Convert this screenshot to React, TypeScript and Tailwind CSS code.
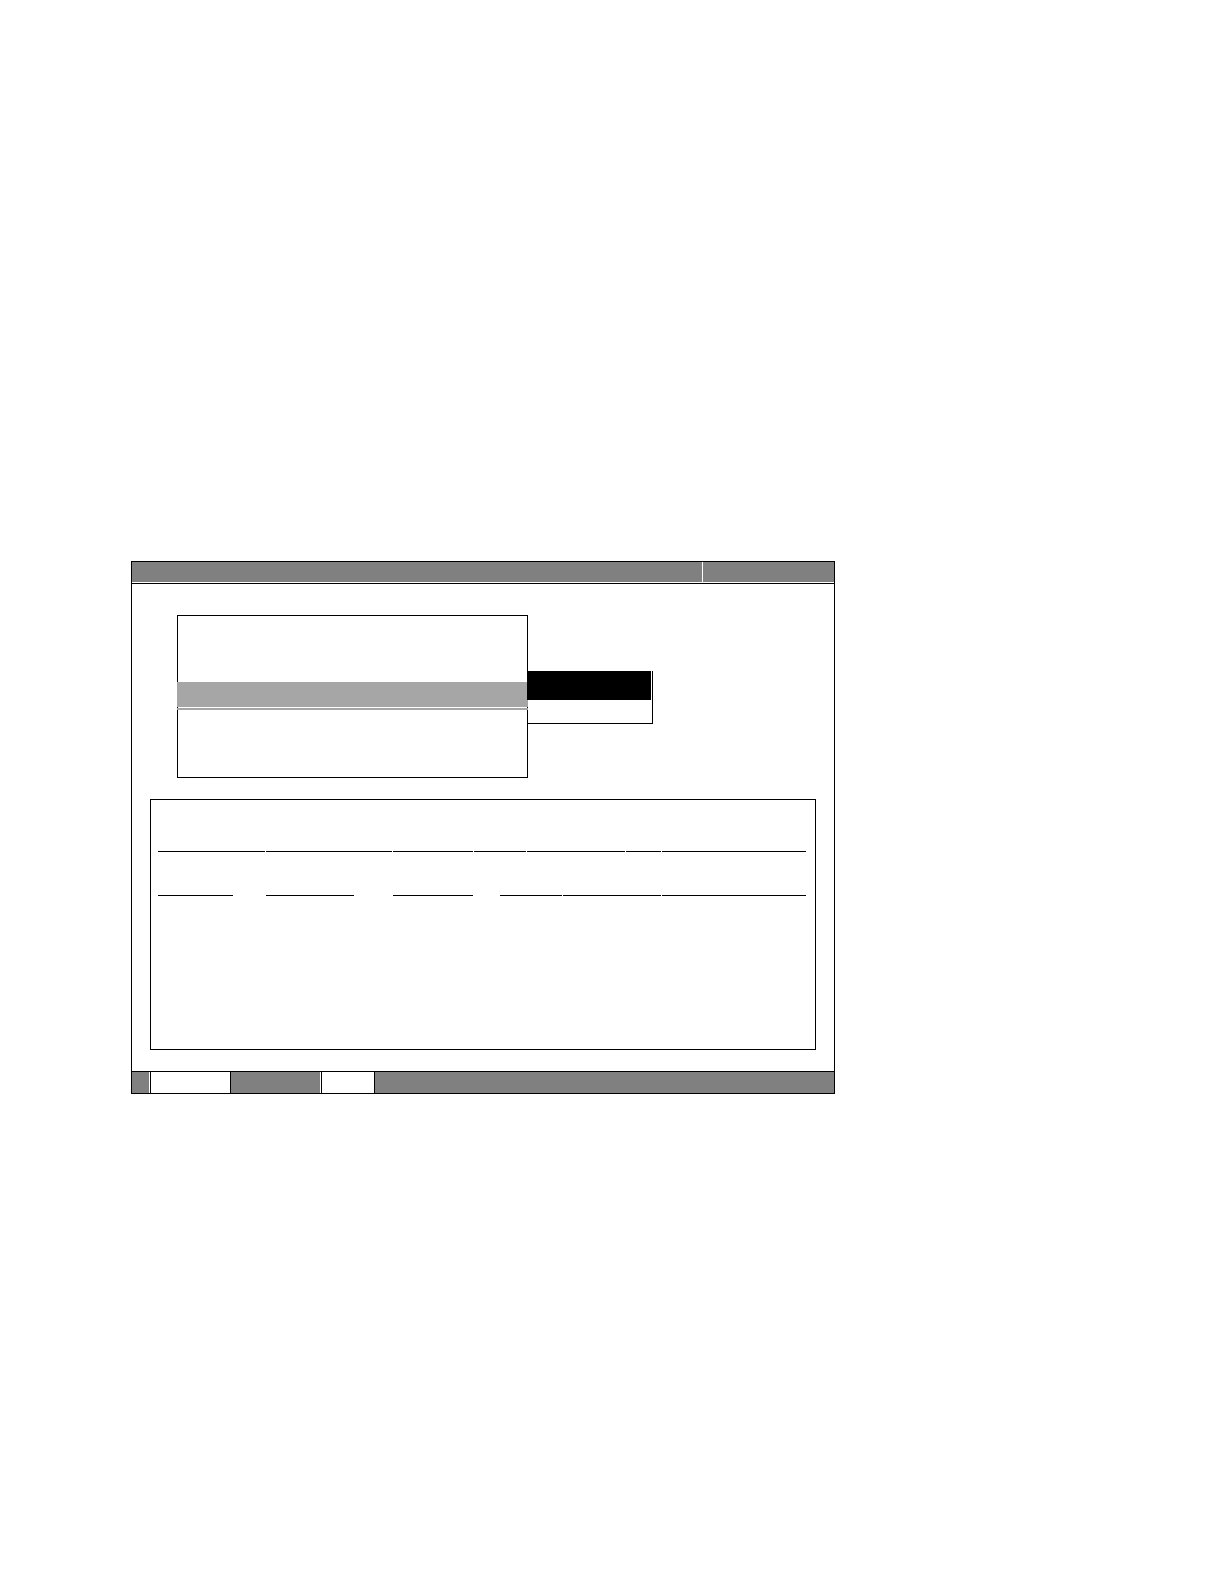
export default function App() {
  return (
    <div className="w-[1224px] h-[1584px] bg-white pt-[561px] pl-[131px] font-['Liberation_Sans',sans-serif]">
      {/* Window frame */}
      <div className="w-[704px] border-l border-r border-black flex flex-col">
        {/* Title bar */}
        <div className="border-t border-black">
          <div className="flex h-[20px]">
            <div className="w-[570px] bg-[#808080]" />
            <div className="w-px bg-white" />
            <div className="flex-1 bg-[#808080]" />
          </div>
          <div className="h-px bg-white" />
          <div className="h-px bg-black" />
        </div>

        {/* Body */}
        <div className="h-[487px] bg-white flex flex-col pt-[31px]">
          {/* List box */}
          <div className="relative ml-[45px] w-[351px] h-[163px] border border-black flex flex-col">
            <div className="h-[66px]" />
            <div className="-mx-px h-[25px] bg-[#a6a6a6]" />
            <div className="h-px bg-white" />
            <div className="-mx-px h-[2px] bg-[#a6a6a6]" />

            {/* Popup menu */}
            <div className="absolute left-[349px] top-[55px] w-[126px] h-[53px] border-r border-b border-black flex flex-col">
              <div className="w-[124px] h-[29px] bg-black" />
            </div>
          </div>

          {/* Table */}
          <div className="mt-[21px] ml-[18px] w-[666px] h-[251px] border border-black flex flex-col pt-[51px] pl-[7px]">
            <div className="flex">
              <div className="h-px w-[107px] bg-black" />
              <div className="h-px ml-px w-[126px] bg-black" />
              <div className="h-px ml-px w-[80px] bg-black" />
              <div className="h-px ml-px w-[52px] bg-black" />
              <div className="h-px ml-px w-[98px] bg-black" />
              <div className="h-px ml-px w-[35px] bg-black" />
              <div className="h-px ml-px w-[144px] bg-black" />
            </div>
            <div className="flex mt-[43px]">
              <div className="h-px w-[75px] bg-black" />
              <div className="h-px ml-[33px] w-[88px] bg-black" />
              <div className="h-px ml-[39px] w-[80px] bg-black" />
              <div className="h-px ml-[27px] w-[62px] bg-black" />
              <div className="h-px ml-px w-[98px] bg-black" />
              <div className="h-px ml-px w-[144px] bg-black" />
            </div>
          </div>
        </div>

        {/* Status bar */}
        <div className="flex h-[23px] border-t border-b border-black">
          <div className="w-[17px] bg-[#808080]" />
          <div className="w-px bg-white" />
          <div className="w-px bg-black" />
          <div className="w-[79px] bg-white" />
          <div className="w-px bg-black" />
          <div className="w-[89px] bg-[#808080]" />
          <div className="w-px bg-white" />
          <div className="w-px bg-black" />
          <div className="w-[52px] bg-white" />
          <div className="w-px bg-black" />
          <div className="flex-1 bg-[#808080]" />
        </div>
      </div>
    </div>
  );
}
